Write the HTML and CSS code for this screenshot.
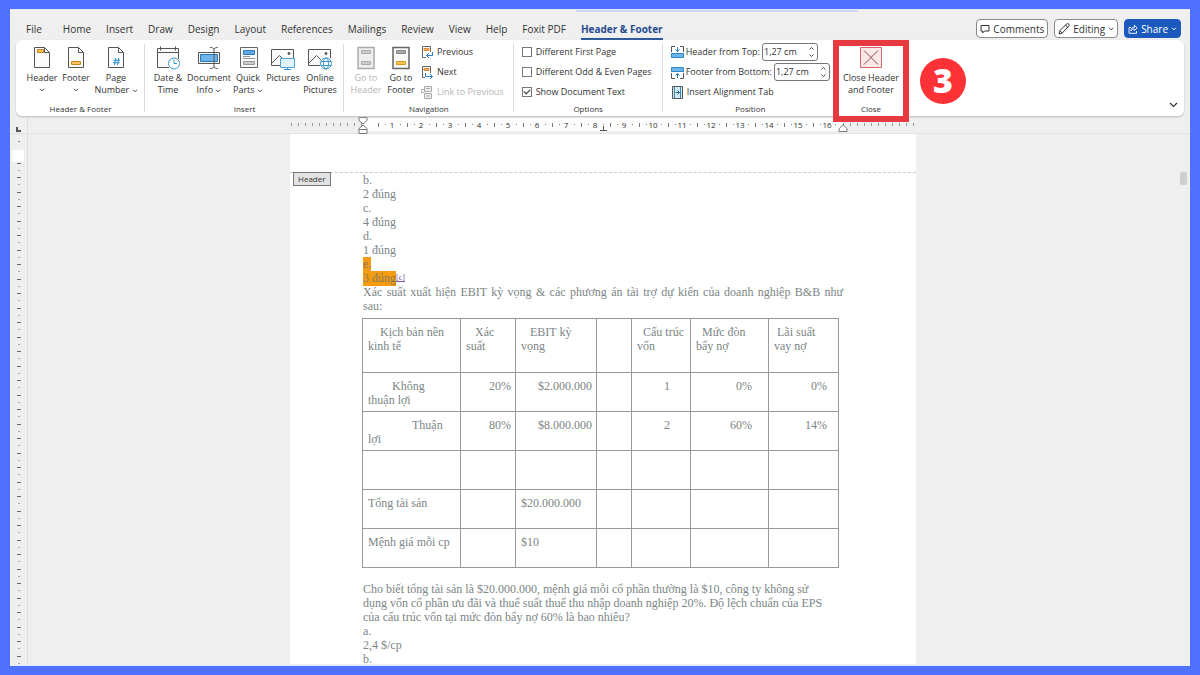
FILE: index.html
```html
<!DOCTYPE html>
<html lang="vi">
<head>
<meta charset="utf-8">
<meta name="viewport" content="width=device-width, initial-scale=1">
<title>Header &amp; Footer</title>
<link rel="stylesheet" href="styles.css">
</head>
<body>
<div class="window">
  <header class="topbar">
    <nav class="tabs">
      <a href="#" class="tab tab-file">File</a>
      <a href="#" class="tab">Home</a>
      <a href="#" class="tab">Insert</a>
      <a href="#" class="tab">Draw</a>
      <a href="#" class="tab">Design</a>
      <a href="#" class="tab">Layout</a>
      <a href="#" class="tab">References</a>
      <a href="#" class="tab">Mailings</a>
      <a href="#" class="tab">Review</a>
      <a href="#" class="tab">View</a>
      <a href="#" class="tab">Help</a>
      <a href="#" class="tab">Foxit PDF</a>
      <a href="#" class="tab tab-active">Header &amp; Footer</a>
    </nav>
    <div class="actions">
      <button class="action" type="button">
        <svg width="10" height="10" viewBox="0 0 10 10" fill="none" stroke="#333"><path d="M1 1.500h8v5.500H4.500L2.500 9V7H1z"/></svg>
        Comments
      </button>
      <button class="action" type="button">
        <svg width="12" height="12" viewBox="0 0 12 12" fill="none" stroke="#333"><path d="M1 11l1-3.500L8.500 1a1.400 1.400 0 0 1 2.200 2.200L4.300 10zM7.500 2l2.300 2.300M2 7.800L4.200 10"/></svg>
        Editing
        <svg width="6" height="4" viewBox="0 0 6 4" fill="none" stroke="#333"><path d="M1 .8l2 2 2-2"/></svg>
      </button>
      <button class="action action-share" type="button">
        <svg width="10" height="10" viewBox="0 0 10 10" fill="none" stroke="#fff" stroke-width=".9"><path d="M3 3.500H1v5.800h7.500V7M3 7c0-2.500 1.200-3.700 3.300-3.700V1.200L9.300 4 6.300 6.500V5C4.800 5 3.800 5.500 3 7z"/></svg>
        Share
        <svg width="6" height="4" viewBox="0 0 6 4" fill="none" stroke="#fff"><path d="M1 .8l2 2 2-2"/></svg>
      </button>
    </div>
  </header>

  <section class="ribbon">
    <div class="group">
      <div class="tools tools-first">
        <button class="big w34" type="button">
          <svg width="24" height="24" viewBox="0 0 24 24" fill="#fafafa" stroke="#555"><path d="M4.500 1.500h10l5 5v15h-15z"/><path d="M14.500 1.500v5h5" fill="none"/><path d="M7.500 3.500h6v3h-6z" fill="#fbc15e" stroke="#c98418"/></svg>
          <span>Header</span><svg class="chev" width="6" height="4" viewBox="0 0 6 4"><path d="M1 .8l2 2 2-2"/></svg>
        </button>
        <button class="big w34" type="button">
          <svg width="24" height="24" viewBox="0 0 24 24" fill="#fafafa" stroke="#555"><path d="M4.500 1.500h10l5 5v15h-15z"/><path d="M14.500 1.500v5h5" fill="none"/><path d="M7.500 15.500h9v3h-9z" fill="#fbc15e" stroke="#c98418"/></svg>
          <span>Footer</span><svg class="chev" width="6" height="4" viewBox="0 0 6 4"><path d="M1 .8l2 2 2-2"/></svg>
        </button>
        <button class="big w46" type="button">
          <svg width="24" height="24" viewBox="0 0 24 24" fill="#fafafa" stroke="#555"><path d="M4.500 1.500h10l5 5v15h-15z"/><path d="M14.500 1.500v5h5" fill="none"/><path d="M11.700 12l-1.200 7M14.700 12l-1.200 7M9.500 14.300h6.500M9 16.700h6.500" fill="none" stroke="#2a8fd0"/></svg>
          <span>Page</span><span>Number <svg class="chev" width="6" height="4" viewBox="0 0 6 4"><path d="M1 .8l2 2 2-2"/></svg></span>
        </button>
      </div>
      <h2 class="caption">Header &amp; Footer</h2>
    </div>

    <div class="group">
      <div class="tools">
        <button class="big w38" type="button">
          <svg width="24" height="24" viewBox="0 0 24 24" fill="#fafafa" stroke="#555"><path d="M13 21.500H1.500v-19h21V13"/><path d="M1.500 6.500h21M4.500 .5v4M19.500 .5v4"/><circle cx="18" cy="17.500" r="5.500" fill="#fff" stroke="#3a97cc"/><path d="M18 13.500v4h3" fill="none" stroke="#3a97cc"/></svg>
          <span>Date &amp;</span><span>Time</span>
        </button>
        <button class="big w44" type="button">
          <svg width="24" height="24" viewBox="0 0 24 24" fill="none" stroke="#555"><path d="M1.500 6.500h21v11h-21z" fill="#fafafa"/><path d="M3.500 8.500h17v7h-17z" fill="#6db5ea" stroke="#2477b8"/><path d="M13 1.500c2 0 4 .5 4 2v17c0 1.500-2 2-4 2M21 1.500c-2 0-4 .5-4 2M17 20.500c0 1.500 2 2 4 2"/></svg>
          <span>Document</span><span>Info <svg class="chev" width="6" height="4" viewBox="0 0 6 4"><path d="M1 .8l2 2 2-2"/></svg></span>
        </button>
        <button class="big w34" type="button">
          <svg width="24" height="24" viewBox="0 0 24 24" fill="#fafafa" stroke="#666"><path d="M4.500 1.500h17v20h-17z"/><path d="M7.500 4.500h11v4h-11z" fill="#5fa8e4" stroke="#2f78bd"/><path d="M7.500 15.500h11v3h-11z" fill="#ccc" stroke="#999"/><path d="M7 10.500h7M7 12.500h12" stroke="#999"/></svg>
          <span>Quick</span><span>Parts <svg class="chev" width="6" height="4" viewBox="0 0 6 4"><path d="M1 .8l2 2 2-2"/></svg></span>
        </button>
        <button class="big w36" type="button">
          <svg width="24" height="24" viewBox="0 0 24 24" fill="none" stroke="#555"><path d="M9 19.500H.5v-16h22V12" fill="#fafafa"/><path d="M1 17l7.500-7.500L13 14"/><circle cx="18" cy="7.500" r="1" fill="#555"/><path d="M9.500 12.500h14v9h-14z" fill="#e2f3fd" stroke="#4aa5d8"/><path d="M13 23.500h7M16.500 21.500v2" stroke="#3a97cc"/></svg>
          <span>Pictures</span>
        </button>
        <button class="big w38" type="button">
          <svg width="24" height="24" viewBox="0 0 24 24" fill="none" stroke="#555"><path d="M12 19.500H.5v-16h22V12" fill="#fafafa"/><path d="M1 17l7.500-7.500L13 14"/><circle cx="18" cy="7.500" r="1" fill="#555"/><g stroke="#3a97cc"><circle cx="18" cy="17.500" r="5.500" fill="#fff"/><ellipse cx="18" cy="17.500" rx="2.500" ry="5.500"/><path d="M13 15.500h10M13 19.500h10"/></g></svg>
          <span>Online</span><span>Pictures</span>
        </button>
      </div>
      <h2 class="caption">Insert</h2>
    </div>

    <div class="group">
      <div class="tools tools-nav">
        <button class="big w36" type="button" disabled>
          <svg width="24" height="24" viewBox="0 0 24 24" fill="#eee" stroke="#aaa"><path d="M4 1.500h16v21H4z" stroke-width="1.500"/><path d="M7.500 4.500h9v3h-9zM7.500 15.500h9v3h-9z" fill="#ccc"/></svg>
          <span>Go to</span><span>Header</span>
        </button>
        <button class="big w34" type="button">
          <svg width="24" height="24" viewBox="0 0 24 24" fill="#fafafa" stroke="#666"><path d="M4 1.500h16v21H4z" stroke-width="1.500"/><path d="M7.500 4.500h9v3h-9z" fill="#aaa" stroke="#888"/><path d="M7.500 15.500h9v3h-9z" fill="#fbc64e" stroke="#dc951d"/></svg>
          <span>Go to</span><span>Footer</span>
        </button>
        <div class="rows rows-nav">
          <button class="row" type="button">
            <svg width="13" height="13" viewBox="0 0 13 13" fill="none" stroke="#666"><path d="M5 11.500H1.500v-11h8V6"/><path d="M3 2.500h5v2H3z" fill="#f6b26b" stroke="#d98a3a"/><path d="M11.500 6v3.500h-6M8 7l-2.500 2.500L8 12" stroke="#2a7fc4"/></svg>
            Previous
          </button>
          <button class="row" type="button">
            <svg width="13" height="13" viewBox="0 0 13 13" fill="none" stroke="#666"><path d="M4 11.500H1.500v-11h8V7"/><path d="M3 2.500h5v2H3z" fill="#f6b26b" stroke="#d98a3a"/><path d="M4.500 7v3.500h7M9 8l2.500 2.500L9 13" stroke="#2a7fc4"/></svg>
            Next
          </button>
          <button class="row" type="button" disabled>
            <svg width="13" height="13" viewBox="0 0 13 13" fill="#eee" stroke="#aaa"><path d="M3.500 .5h7v5h-7zM3.500 7.500h7v5h-7z"/><path d="M5 2.500h4M5 10h4M3.500 3.500h-3v3h3" fill="none"/></svg>
            Link to Previous
          </button>
        </div>
      </div>
      <h2 class="caption">Navigation</h2>
    </div>

    <div class="group">
      <div class="tools tools-inset">
        <div class="rows">
          <label class="row"><input class="check" type="checkbox">Different First Page</label>
          <label class="row"><input class="check" type="checkbox">Different Odd &amp; Even Pages</label>
          <label class="row"><input class="check" type="checkbox" checked>Show Document Text</label>
        </div>
      </div>
      <h2 class="caption">Options</h2>
    </div>

    <div class="group">
      <div class="tools tools-position">
        <div class="rows">
          <div class="row row-tight">
            <svg width="13" height="13" viewBox="0 0 13 13" fill="none" stroke="#555"><path d="M.5 6V.5H4M9 .5h3.500V6"/><path d="M.5 7.500h12v4H.5z" fill="#6db5ea" stroke="#2f86c8"/><path d="M6.500 1v4.500M4.500 3.500l2 2 2-2" stroke="#2477b8"/></svg>
            <label for="top">Header from Top:</label>
            <span class="spin"><input id="top" type="text" value="1,27 cm"><span class="steps"><button type="button" aria-label="Increase"><svg width="5" height="3" viewBox="0 0 5 3"><path d="M.5 2.500l2-2 2 2"/></svg></button><button type="button" aria-label="Decrease"><svg width="5" height="3" viewBox="0 0 5 3"><path d="M.5 .5l2 2 2-2"/></svg></button></span></span>
          </div>
          <div class="row row-tight">
            <svg width="13" height="13" viewBox="0 0 13 13" fill="none" stroke="#555"><path d="M.5 7v5.500H4M9 12.500h3.500V7"/><path d="M.5 1.500h12v4H.5z" fill="#6db5ea" stroke="#2f86c8"/><path d="M6.500 12V7.500M4.500 9.500l2-2 2 2" stroke="#2477b8"/></svg>
            <label for="bottom">Footer from Bottom:</label>
            <span class="spin"><input id="bottom" type="text" value="1,27 cm"><span class="steps"><button type="button" aria-label="Increase"><svg width="5" height="3" viewBox="0 0 5 3"><path d="M.5 2.500l2-2 2 2"/></svg></button><button type="button" aria-label="Decrease"><svg width="5" height="3" viewBox="0 0 5 3"><path d="M.5 .5l2 2 2-2"/></svg></button></span></span>
          </div>
          <button class="row" type="button">
            <svg width="13" height="13" viewBox="0 0 13 13" fill="none" stroke="#555"><path d="M1.500 .5h10v12h-10z" fill="#d5e9f2"/><path d="M3.500 .5v12" stroke="#3a87ab"/><path d="M9.500 .5v12" stroke="#3a87ab"/><path d="M4.500 6.500h4M6.500 4.500l2 2-2 2" stroke="#256c90"/></svg>
            Insert Alignment Tab
          </button>
        </div>
      </div>
      <h2 class="caption">Position</h2>
    </div>

    <div class="group group-close">
      <div class="tools tools-center">
        <button class="big w62" type="button">
          <svg width="24" height="24" viewBox="0 0 24 24" fill="#fbe9ea" stroke="#d4666b"><path d="M1.500 1.500h21v20h-21z"/><path d="M5 4.500l14 14M19 4.500l-14 14" fill="none" stroke="#8a4a4d"/></svg>
          <span>Close Header</span><span>and Footer</span>
        </button>
      </div>
      <h2 class="caption">Close</h2>
      <div class="highlight-box"></div>
      <div class="step">3</div>
    </div>
    <button class="collapse" type="button" aria-label="Collapse ribbon"><svg width="9" height="6" viewBox="0 0 9 6" fill="none" stroke="#333" stroke-width="1.200"><path d="M1 1l3.500 3.500L8 1"/></svg></button>
  </section>

  <div class="ruler">
    <div class="corner"><svg width="5" height="5" viewBox="0 0 5 5" fill="none" stroke="#555" stroke-width="2"><path d="M1 0v4h4"/></svg></div>
    <div class="ruler-track">
      <div class="scale scale-left"></div>
      <div class="scale-body">
        <span class="cell">1</span><span class="cell">2</span><span class="cell">3</span><span class="cell">4</span><span class="cell">5</span><span class="cell">6</span><span class="cell">7</span><span class="cell">8</span><span class="cell">9</span><span class="cell">10</span><span class="cell">11</span><span class="cell">12</span><span class="cell">13</span><span class="cell">14</span><span class="cell">15</span><span class="cell">16</span>
        <svg class="marker marker-indent" width="10" height="17" viewBox="0 0 10 17" fill="#fff" stroke="#777"><path d="M1 .5h8v3L5 7 1 3.500zM5 8l4 3.500v5H1v-5zM1 12.500h8"/></svg>
        <svg class="marker marker-tab" width="7" height="5" viewBox="0 0 7 5" fill="none" stroke="#555"><path d="M0 4.500h7M3.500 0v4"/></svg>
        <svg class="marker marker-right" width="10" height="8" viewBox="0 0 10 8" fill="#fff" stroke="#777"><path d="M5 .8l4 4v2.700H1V4.800z"/></svg>
      </div>
      <div class="scale scale-right"></div>
    </div>
  </div>

  <main class="workspace">
    <div class="side-ruler">
      <svg width="17" height="100%">
        <defs><pattern id="ticks" width="17" height="29" y="29" patternUnits="userSpaceOnUse"><path d="M7 .5h4M7 14.500h4" stroke="#666"/><path d="M8 7.500h2M8 21.500h2" stroke="#aaa"/></pattern></defs>
        <path d="M8 7.500h2" stroke="#888"/>
        <rect x="2" y="16" width="12" height="12" fill="#fff"/>
        <rect y="29" width="17" height="100%" fill="url(#ticks)"/>
      </svg>
    </div>
    <div class="canvas">
      <article class="page">
        <span class="header-tag">Header</span>
        <p>b.</p>
        <p>2 đúng</p>
        <p>c.</p>
        <p>4 đúng</p>
        <p>d.</p>
        <p>1 đúng</p>
        <p><mark>e.</mark></p>
        <p><mark>3 đúng</mark><a class="note" href="#">[c]</a></p>
        <p><span class="justify">Xác suất xuất hiện EBIT kỳ vọng &amp; các phương án tài trợ dự kiến của doanh nghiệp B&amp;B như</span> sau:</p>
        <table class="data">
          <colgroup><col class="c98"><col class="c55"><col class="c81"><col class="c35"><col class="c59"><col class="c78"><col class="c70"></colgroup>
          <tr class="tall">
            <td class="in12">Kịch bản nền kinh tế</td><td class="in9">Xác suất</td><td class="in9">EBIT kỳ vọng</td><td></td><td class="in6">Cấu trúc vốn</td><td class="in6">Mức đòn bẩy nợ</td><td class="in3">Lãi suất<br>vay nợ</td>
          </tr>
          <tr>
            <td class="in24">Không<br>thuận lợi</td><td class="num">20%</td><td class="num">$2.000.000</td><td></td><td class="num r20">1</td><td class="num r16">0%</td><td class="num r11">0%</td>
          </tr>
          <tr>
            <td class="in44">Thuận lợi</td><td class="num">80%</td><td class="num">$8.000.000</td><td></td><td class="num r20">2</td><td class="num r16">60%</td><td class="num r11">14%</td>
          </tr>
          <tr><td></td><td></td><td></td><td></td><td></td><td></td><td></td></tr>
          <tr><td>Tổng tài sản</td><td></td><td>$20.000.000</td><td></td><td></td><td></td><td></td></tr>
          <tr><td>Mệnh giá mỗi cp</td><td></td><td>$10</td><td></td><td></td><td></td><td></td></tr>
        </table>
        <p>Cho biết tổng tài sản là $20.000.000, mệnh giá mỗi cổ phần thường là $10, công ty không sử<br>dụng vốn cổ phần ưu đãi và thuế suất thuế thu nhập doanh nghiệp 20%. Độ lệch chuẩn của EPS<br>của cấu trúc vốn tại mức đòn bẩy nợ 60% là bao nhiêu?</p>
        <p>a.</p>
        <p>2,4 $/cp</p>
        <p>b.</p>
      </article>
    </div>
    <div class="scrollbar"><div class="thumb"></div></div>
  </main>
</div>
</body>
</html>
```
FILE: styles.css
```css
* { box-sizing: border-box; }
body {
  margin: 0;
  height: 100vh;
  padding: 9px 10px;
  background: #5070ff;
  color: #333;
  font: 9px/12px "Open Sans", "Noto Sans", sans-serif;
}
button, input { font: inherit; color: inherit; }
button { border: 0; padding: 0; background: none; }
button:disabled { color: #b5b5b5; }
svg { flex: none; }
.window {
  height: 100%;
  display: flex;
  flex-direction: column;
  overflow: hidden;
  background: #efefef;
  border-bottom: 2px solid #e9effb;
}

/* Tabs */
.topbar {
  height: 31px;
  flex: none;
  display: flex;
  justify-content: space-between;
  align-items: flex-start;
  padding: 0 9px 0 16px;
  border-top: 1px solid #e3eafb;
  background: linear-gradient(#ccd8f6, #ccd8f6) 63% 0 / 282px 2px no-repeat;
}
.tabs { display: flex; gap: 15px; padding-top: 10px; font-size: 10px; line-height: 18px; }
.tab { color: #333; text-decoration: none; white-space: nowrap; }
.tab-file { margin-right: 6px; }
.tab-active { color: #274b8f; font-weight: 700; border-bottom: 2px solid #2b579a; }
.actions { display: flex; gap: 6px; padding-top: 9px; }
.action {
  display: flex;
  align-items: center;
  gap: 3px;
  height: 19px;
  padding: 0 3px;
  border: 1px solid #8a8a8a;
  border-radius: 4px;
  background: #fff;
  font-size: 10px;
}
.action-share { background: #1b5abc; border-color: #1b5abc; color: #fff; }

/* Ribbon */
.ribbon {
  position: relative;
  z-index: 1;
  flex: none;
  display: flex;
  height: 76px;
  margin: 0 6px;
  background: #fff;
  border-radius: 6px;
  box-shadow: 0 1px 2px #bbb;
}
.group {
  position: relative;
  display: flex;
  flex-direction: column;
  justify-content: space-between;
}
.group::after {
  content: "";
  position: absolute;
  right: 0;
  top: 4px;
  bottom: 4px;
  border-right: 1px solid #dcdcdc;
}
.group-close::after { display: none; }
.tools { display: flex; padding: 0 5px 0 4px; }
.tools-first { padding: 0 6px 0 9px; }
.tools-nav { padding-right: 10px; }
.tools-inset { padding: 0 11px 0 8px; }
.tools-position { padding: 0 8px; }
.tools-center { justify-content: center; padding: 0 2px; }
.big {
  display: flex;
  flex-direction: column;
  align-items: center;
  padding-top: 6px;
  white-space: nowrap;
}
.big > svg:first-child { margin-bottom: 2px; }
.big > .chev { margin-top: 4px; }
.chev { fill: none; stroke: #444; vertical-align: middle; }
.w34 { width: 34px; }
.w36 { width: 36px; }
.w38 { width: 38px; }
.w44 { width: 44px; }
.w46 { width: 46px; }
.w62 { width: 62px; }
.caption {
  margin: 0;
  padding-bottom: 1px;
  font-size: 8px;
  line-height: 12px;
  font-weight: 400;
  text-align: center;
}
.rows { display: flex; flex-direction: column; padding-top: 2px; }
.rows-nav { padding-left: 3px; }
.row { display: flex; align-items: center; gap: 3px; height: 20px; white-space: nowrap; }
.row-tight { gap: 2px; }
.check {
  appearance: none;
  width: 10px;
  height: 10px;
  margin: 0 1px 0 0;
  border: 1px solid #777;
  background: #fff;
}
.check:checked::before {
  content: "";
  display: block;
  width: 5px;
  height: 3px;
  margin: 1px;
  border: solid #333;
  border-width: 0 0 1px 1px;
  transform: rotate(-45deg);
}
.spin {
  display: flex;
  width: 56px;
  height: 18px;
  border: 1px solid #777;
  border-radius: 3px;
}
.spin input { flex: 1; min-width: 0; border: 0; padding: 0 0 0 1px; background: none; outline: 0; }
.steps { display: flex; flex-direction: column; justify-content: space-between; padding: 3px 3px; }
.steps button { display: flex; }
.steps svg { fill: none; stroke: #444; }
.highlight-box {
  position: absolute;
  inset: 0 -5px -6px -5px;
  border: 6px solid #e63940;
}
.step {
  position: absolute;
  left: calc(100% + 16px);
  top: 18px;
  width: 46px;
  height: 46px;
  border-radius: 50%;
  background: #fd3236;
  color: #fff;
  font-size: 34px;
  line-height: 45px;
  font-weight: 800;
  text-align: center;
}
.collapse { position: absolute; right: 6px; bottom: 8px; display: flex; }

/* Rulers */
.ruler { flex: none; display: flex; height: 18px; padding-right: 12px; border-bottom: 1px solid #e4e4e4; }
.corner { width: 18px; padding: 7px 0 0 6px; border-right: 1px solid #e0e0e0; }
.ruler-track { flex: 1; display: flex; justify-content: center; padding: 2px 0; }
.scale {
  background: repeating-linear-gradient(90deg, #999 0 1px, transparent 1px 7px) 0 5px / 100% 3px no-repeat;
}
.scale-left { width: 72px; }
.scale-right { width: 73px; }
.scale-body { position: relative; display: flex; width: 480px; padding-left: 15px; background: #fdfdfd; }
.cell {
  width: 29px;
  font-size: 8px;
  line-height: 13px;
  text-align: center;
  background:
    linear-gradient(#777, #777) 0 5px / 1px 4px no-repeat,
    linear-gradient(#888, #888) 7px 6px / 1px 1px no-repeat,
    linear-gradient(#888, #888) 22px 6px / 1px 1px no-repeat;
}
.marker { position: absolute; }
.marker-indent { left: -5px; top: -1px; }
.marker-tab { left: 237px; top: 8px; }
.marker-right { right: -5px; top: 6px; }

/* Document */
.workspace { flex: 1; min-height: 0; display: flex; }
.side-ruler { width: 18px; border-right: 1px solid #e0e0e0; overflow: hidden; }
.canvas { flex: 1; display: flex; justify-content: center; overflow: hidden; }
.scrollbar { width: 12px; padding: 38px 3px 0 2px; }
.thumb { height: 13px; border-radius: 2px; background: #cfcfcf; }
.page {
  position: relative;
  flex: none;
  width: 626px;
  min-height: 100%;
  padding: 39px 73px 0;
  background: #fff;
  color: #7b8586;
  font: 12px/14px "Liberation Serif", serif;
}
.page::before {
  content: "";
  position: absolute;
  left: 0;
  right: 0;
  top: 38px;
  border-top: 1px dashed #ccc;
}
.page p { margin: 0; }
.justify { display: block; text-align: justify; text-align-last: justify; }
mark { padding-bottom: 1px; background: #f39c12; color: #8d7a55; }
.note { color: #7a55a8; font-size: 8px; line-height: 8px; vertical-align: 2px; }
.header-tag {
  position: absolute;
  left: 3px;
  top: 38px;
  padding: 0 4px;
  border: 1px solid #777;
  background: #e2e2e2;
  color: #333;
  font: 8px/12px "Open Sans", sans-serif;
}
.data {
  width: 476px;
  margin: 5px 0 14px -1px;
  border-collapse: collapse;
  table-layout: fixed;
}
.data td { height: 39px; padding: 6px 4px 0 5px; border: 1px solid #999; vertical-align: top; }
.data .tall td { height: 54px; }
.c98 { width: 98px; }
.c55 { width: 55px; }
.c81 { width: 81px; }
.c35 { width: 35px; }
.c59 { width: 59px; }
.c78 { width: 78px; }
.c70 { width: 70px; }
.in3 { text-indent: 3px; }
.in6 { text-indent: 6px; }
.in9 { text-indent: 9px; }
.in12 { text-indent: 12px; }
.in24 { text-indent: 24px; }
.in44 { text-indent: 44px; }
.data .num { text-align: right; }
.data .r20 { padding-right: 20px; }
.data .r16 { padding-right: 16px; }
.data .r11 { padding-right: 11px; }
```
